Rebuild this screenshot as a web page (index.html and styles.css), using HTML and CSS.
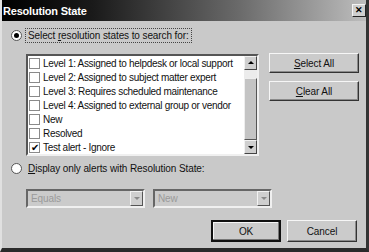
FILE: index.html
```html
<!DOCTYPE html>
<html lang="en">
<head>
  <meta charset="UTF-8" />
  <title>Resolution State</title>
  <link rel="stylesheet" href="styles.css">
</head>
<body>

  <div class="dialog">
    <div class="titlebar">
      <span class="title">Resolution State</span>
      <span class="close">&#x2715;</span>
    </div>

    <div class="content">
      <div class="option">
        <span class="radio checked"></span>
        <span class="label focus">Select <u>r</u>esolution states to search for:</span>
      </div>

      <div class="list-area">
        <div class="list">
          <div class="items">
            <div class="item"><span class="box"></span>Level 1: Assigned to helpdesk or local support</div>
            <div class="item"><span class="box"></span>Level 2: Assigned to subject matter expert</div>
            <div class="item"><span class="box"></span>Level 3: Requires scheduled maintenance</div>
            <div class="item"><span class="box"></span>Level 4: Assigned to external group or vendor</div>
            <div class="item"><span class="box"></span>New</div>
            <div class="item"><span class="box"></span>Resolved</div>
            <div class="item"><span class="box ticked">&#x2714;</span>Test alert - Ignore</div>
          </div>
          <div class="scrollbar">
            <div class="arrow up"></div>
            <div class="track"></div>
            <div class="thumb"></div>
            <div class="arrow down"></div>
          </div>
        </div>

        <div class="side-buttons">
          <button><u>S</u>elect All</button>
          <button><u>C</u>lear All</button>
        </div>
      </div>

      <div class="option second">
        <span class="radio"></span>
        <span class="label"><u>D</u>isplay only alerts with Resolution State:</span>
      </div>

      <div class="combos">
        <div class="combo">Equals<span class="drop"></span></div>
        <div class="combo">New<span class="drop"></span></div>
      </div>

      <div class="footer">
        <button class="default">OK</button>
        <button>Cancel</button>
      </div>
    </div>
  </div>

</body>
</html>
```

FILE: styles.css
```css
body {
  margin: 0;
  padding: 0;
  background-color: #c9c9c9;
  font-family: 'Liberation Sans', Arial, sans-serif;
  font-size: 10px;
  letter-spacing: -0.1px;
  color: #111;
}

.dialog {
  width: 369px;
  height: 252px;
  box-sizing: border-box;
  background-color: #c9c9c9;
  border-left: 2px solid #e0e0e0;
  border-right: 3px solid #333;
  border-bottom: 4px solid #2a2a2a;
}

.titlebar {
  height: 21px;
  display: flex;
  align-items: center;
  justify-content: space-between;
  padding: 0 0 0 1px;
  background: linear-gradient(to right, #000 0%, #1a1a1a 25%, #6a6a6a 65%, #bdbdbd 100%);
}

.title {
  color: #fff;
  font-weight: bold;
  font-size: 11px;
  letter-spacing: -0.2px;
}

.close {
  width: 12px;
  height: 11px;
  background-color: #cfcfcf;
  border: 1px solid;
  border-color: #f4f4f4 #222 #222 #f4f4f4;
  font-size: 9px;
  font-weight: bold;
  line-height: 11px;
  text-align: center;
  color: #000;
}

.content {
  padding: 6px 0 0 9px;
}

.option {
  display: flex;
  align-items: center;
  height: 17px;
}

.radio {
  width: 9px;
  height: 9px;
  border-radius: 50%;
  background-color: #fff;
  border: 1px solid #555;
  margin-right: 3px;
  position: relative;
}

.radio.checked::after {
  content: "";
  position: absolute;
  left: 2px;
  top: 2px;
  width: 5px;
  height: 5px;
  border-radius: 50%;
  background-color: #000;
}

.label {
  padding: 1px 2px;
  border: 1px solid transparent;
}

.label.focus {
  border: 1px dotted #444;
}

.list-area {
  display: flex;
  margin: 10px 0 0 15px;
}

.list {
  flex: none;
  width: 229px;
  height: 98px;
  display: flex;
  background-color: #fff;
  border: 2px solid;
  border-color: #555 #f0f0f0 #f0f0f0 #555;
}

.items {
  flex: 1;
  min-width: 0;
  overflow: hidden;
  letter-spacing: -0.3px;
}

.item {
  display: flex;
  align-items: center;
  height: 14px;
  white-space: nowrap;
}

.box {
  flex: none;
  width: 9px;
  height: 9px;
  border: 1px solid #8a8a8a;
  margin: 0 3px 0 1px;
  font-size: 10px;
  line-height: 9px;
  text-align: center;
  color: #000;
}

.scrollbar {
  flex: none;
  width: 13px;
  display: flex;
  flex-direction: column;
}

.arrow {
  height: 14px;
  box-sizing: border-box;
  background-color: #cfcfcf;
  border: 1px solid;
  border-color: #f2f2f2 #444 #444 #f2f2f2;
  position: relative;
}

.arrow::after {
  content: "";
  position: absolute;
  left: 3px;
  border-left: 3px solid transparent;
  border-right: 3px solid transparent;
}

.arrow.up::after {
  top: 4px;
  border-bottom: 3px solid #000;
}

.arrow.down::after {
  top: 5px;
  border-top: 3px solid #000;
}

.track {
  height: 8px;
  background-color: #ececec;
}

.thumb {
  flex: 1;
  box-sizing: border-box;
  background-color: #c4c4c4;
  border: 1px solid;
  border-color: #eee #555 #555 #eee;
}

.side-buttons {
  display: flex;
  flex-direction: column;
  gap: 8px;
  margin-left: 10px;
  margin-top: -1px;
}

button {
  width: 90px;
  height: 20px;
  padding: 0;
  font-family: 'Liberation Sans', Arial, sans-serif;
  font-size: 10px;
  letter-spacing: -0.1px;
  color: #111;
  background-color: #cbcbcb;
  border: 1px solid;
  border-color: #f6f6f6 #333 #333 #f6f6f6;
  box-shadow: inset -1px -1px 0 #8a8a8a;
}

.option.second {
  margin-top: 4px;
}

.combos {
  display: flex;
  gap: 8px;
  margin: 12px 0 0 15px;
}

.combo {
  width: 112px;
  height: 15px;
  line-height: 15px;
  padding-left: 3px;
  display: flex;
  justify-content: space-between;
  color: #9a9a9a;
  background-color: #cbcbcb;
  border: 2px solid;
  border-color: #666 #f0f0f0 #f0f0f0 #666;
}

.drop {
  width: 13px;
  height: 15px;
  box-sizing: border-box;
  background-color: #cfcfcf;
  border: 1px solid;
  border-color: #f2f2f2 #555 #555 #f2f2f2;
  position: relative;
}

.drop::after {
  content: "";
  position: absolute;
  left: 3px;
  top: 5px;
  border-left: 3px solid transparent;
  border-right: 3px solid transparent;
  border-top: 3px solid #8a8a8a;
}

.footer {
  display: flex;
  justify-content: flex-end;
  gap: 6px;
  margin: 12px 9px 0 0;
}

.footer button {
  width: 70px;
  height: 22px;
}

.footer button.default {
  border: 2px solid #111;
  box-shadow: inset -1px -1px 0 #777, inset 1px 1px 0 #f6f6f6;
}
```
